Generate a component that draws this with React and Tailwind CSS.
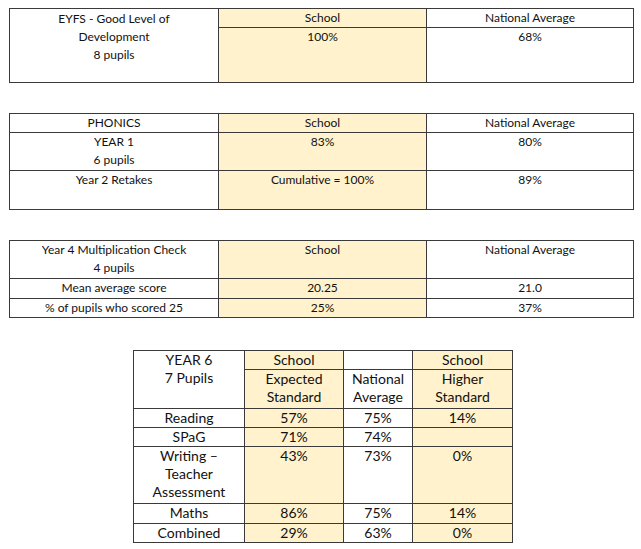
import React from "react";

const line = "border border-[#3a3a3a]";
const gold = "bg-[#fff2cc]";

function Cell({ children, className = "", ...rest }) {
  return (
    <td className={`${line} align-top text-center p-0 ${className}`} {...rest}>
      {children}
    </td>
  );
}

function ThreeCol({ children }) {
  return (
    <table className="table-fixed border-collapse w-[624px] text-[12px] leading-[18px]">
      <colgroup>
        <col className="w-[209px]" />
        <col className="w-[208px]" />
        <col className="w-[207px]" />
      </colgroup>
      <tbody>{children}</tbody>
    </table>
  );
}

const year6 = [
  { label: ["Reading"], exp: "57%", nat: "75%", high: "14%", h: "h-[19px]" },
  { label: ["SPaG"], exp: "71%", nat: "74%", high: "", h: "h-[19px]" },
  { label: ["Writing –", "Teacher", "Assessment"], exp: "43%", nat: "73%", high: "0%", h: "h-[57px]" },
  { label: ["Maths"], exp: "86%", nat: "75%", high: "14%", h: "h-[20px]" },
  { label: ["Combined"], exp: "29%", nat: "63%", high: "0%", h: "h-[19px]" },
];

export default function App() {
  return (
    <div className="w-[641px] h-[549px] bg-white text-[#111] pl-[9px] pt-[8px] font-['Lato','Liberation_Sans',sans-serif]">

      {/* EYFS */}
      <ThreeCol>
        <tr className="h-[19px]">
          <Cell rowSpan={2} className="pt-[1px]">
            EYFS - Good Level of<br />Development<br />8 pupils
          </Cell>
          <Cell className={gold}>School</Cell>
          <Cell>National Average</Cell>
        </tr>
        <tr className="h-[55px]">
          <Cell className={gold}>100%</Cell>
          <Cell>68%</Cell>
        </tr>
      </ThreeCol>

      {/* Phonics */}
      <div className="mt-[30px]">
        <ThreeCol>
          <tr className="h-[19px]">
            <Cell>PHONICS</Cell>
            <Cell className={gold}>School</Cell>
            <Cell>National Average</Cell>
          </tr>
          <tr className="h-[38px]">
            <Cell>YEAR 1<br />6 pupils</Cell>
            <Cell className={gold}>83%</Cell>
            <Cell>80%</Cell>
          </tr>
          <tr className="h-[39px]">
            <Cell>Year 2 Retakes</Cell>
            <Cell className={gold}>Cumulative = 100%</Cell>
            <Cell>89%</Cell>
          </tr>
        </ThreeCol>
      </div>

      {/* Multiplication check */}
      <div className="mt-[30px]">
        <ThreeCol>
          <tr className="h-[38px]">
            <Cell>Year 4 Multiplication Check<br />4 pupils</Cell>
            <Cell className={gold}>School</Cell>
            <Cell>National Average</Cell>
          </tr>
          <tr className="h-[20px]">
            <Cell>Mean average score</Cell>
            <Cell className={gold}>20.25</Cell>
            <Cell>21.0</Cell>
          </tr>
          <tr className="h-[19px]">
            <Cell>% of pupils who scored 25</Cell>
            <Cell className={gold}>25%</Cell>
            <Cell>37%</Cell>
          </tr>
        </ThreeCol>
      </div>

      {/* Year 6 */}
      <div className="mt-[32px] ml-[124px]">
        <table className="table-fixed border-collapse w-[379px] text-[14px] leading-[18px]">
          <colgroup>
            <col className="w-[111px]" />
            <col className="w-[99px]" />
            <col className="w-[69px]" />
            <col className="w-[100px]" />
          </colgroup>
          <tbody>
            <tr className="h-[19px]">
              <Cell rowSpan={2}>YEAR 6<br />7 Pupils</Cell>
              <Cell className={gold}>School</Cell>
              <Cell></Cell>
              <Cell className={gold}>School</Cell>
            </tr>
            <tr className="h-[39px]">
              <Cell className={gold}>Expected<br />Standard</Cell>
              <Cell>National<br />Average</Cell>
              <Cell className={gold}>Higher<br />Standard</Cell>
            </tr>
            {year6.map((r) => (
              <tr key={r.label[0]} className={r.h}>
                <Cell>
                  {r.label.map((l, i) => (
                    <div key={i}>{l}</div>
                  ))}
                </Cell>
                <Cell className={gold}>{r.exp}</Cell>
                <Cell>{r.nat}</Cell>
                <Cell className={gold}>{r.high}</Cell>
              </tr>
            ))}
          </tbody>
        </table>
      </div>
    </div>
  );
}
